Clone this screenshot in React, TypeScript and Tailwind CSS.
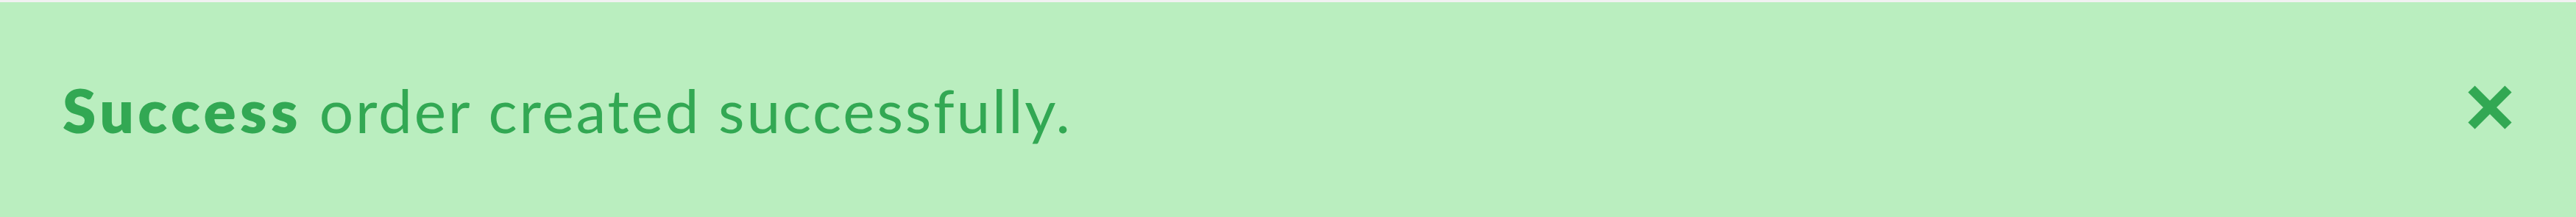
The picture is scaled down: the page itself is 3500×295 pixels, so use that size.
export default function App() {
  return (
    <div className="w-full h-[295px] bg-[#f1f1f1] pt-[3px]">
      <div className="h-[292px] bg-[#baeebf] flex items-center justify-between pl-[85px] pr-[87px]">
        <p
          className="text-[82px] leading-none text-[#32a853] tracking-[0.034em]"
          style={{ fontFamily: "Lato, 'Noto Sans', sans-serif" }}
        >
          <span className="font-extrabold tracking-[0.066em]">Success</span> order created successfully.
        </p>
        <svg width="60" height="60" viewBox="0 0 60 60" className="mt-[-6px]">
          <path d="M5 5 L55 55 M55 5 L5 55" stroke="#32a853" strokeWidth="13" fill="none" />
        </svg>
      </div>
    </div>
  );
}
